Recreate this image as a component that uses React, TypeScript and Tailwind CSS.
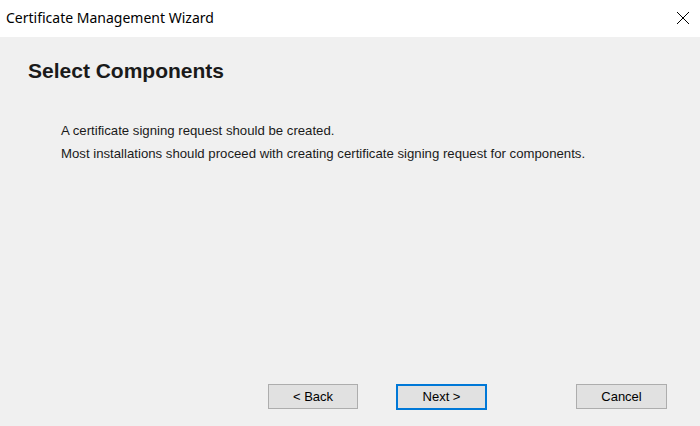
export default function App() {
  return (
    <div className="w-[700px] h-[426px] flex flex-col bg-[#f0f0f0] overflow-hidden">
      <div className="h-[37px] bg-white flex items-center justify-between pl-[6px] pr-[8px] shrink-0">
        <span className="text-[14px] text-black font-['Noto_Sans',sans-serif] leading-none -mt-[2px]">
          Certificate Management Wizard
        </span>
        <svg width="14" height="14" viewBox="0 0 14 14" className="mr-[2px] -mt-[2px]">
          <path d="M1 1 L13 13 M13 1 L1 13" stroke="#000" strokeWidth="1" />
        </svg>
      </div>
      <div className="flex-1 flex flex-col font-['Liberation_Sans',Arial,sans-serif]">
        <h1 className="pl-[28px] pt-[23px] text-[21px] font-bold text-[#1a1a1a] leading-none">
          Select Components
        </h1>
        <div className="pl-[61px] pt-[38px] text-[13.2px] text-[#1a1a1a] leading-[23px]">
          <p>A certificate signing request should be created.</p>
          <p>Most installations should proceed with creating certificate signing request for components.</p>
        </div>
        <div className="mt-auto mb-[16px] flex pl-[268px] h-[26px]">
          <button className="w-[90px] h-[25px] bg-[#e1e1e1] border border-[#adadad] text-[13px] text-black">
            &lt; Back
          </button>
          <button className="ml-[38px] w-[91px] h-[26px] bg-[#e1e1e1] border-2 border-[#0078d7] text-[13px] text-black">
            Next &gt;
          </button>
          <button className="ml-[89px] w-[91px] h-[25px] bg-[#e1e1e1] border border-[#adadad] text-[13px] text-black">
            Cancel
          </button>
        </div>
      </div>
    </div>
  );
}
